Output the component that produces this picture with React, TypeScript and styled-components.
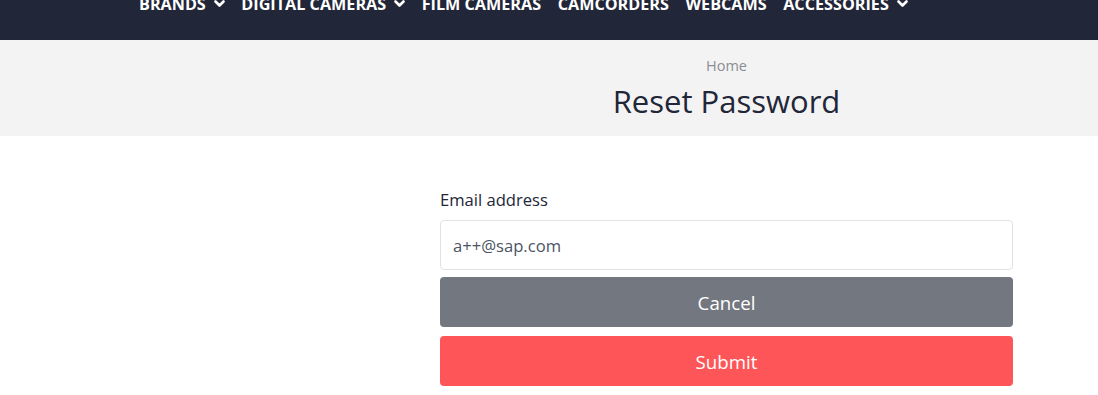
import React from "react";
import styled, { createGlobalStyle } from "styled-components";

const Global = createGlobalStyle`
  html, body { margin: 0; padding: 0; background: #ffffff; }
  body { font-family: "Open Sans", "Noto Sans", sans-serif; overflow: hidden; }
  * { box-sizing: border-box; }
`;

const Page = styled.div`
  width: 1098px;
  height: 395px;
  overflow: hidden;
  background: #ffffff;
`;

const NavBar = styled.nav`
  height: 40px;
  background: #212638;
  overflow: hidden;
`;

const NavList = styled.ul`
  list-style: none;
  margin: -8px 0 0 0;
  padding: 0 0 0 139px;
  display: flex;
  gap: 16.5px;
`;

const NavItem = styled.li`
  display: flex;
  align-items: center;
  gap: 8px;
  color: #ffffff;
  font-size: 16.2px;
  font-weight: 700;
  line-height: 24px;
  text-transform: uppercase;
  white-space: nowrap;
`;

const Chevron = () => (
  <svg width="11" height="8" viewBox="0 0 11 8" style={{ marginTop: -1 }}>
    <polyline points="1.5,1.5 5.5,5.5 9.5,1.5" fill="none" stroke="#fff" strokeWidth="2.6" strokeLinecap="round" strokeLinejoin="round" />
  </svg>
);

const Band = styled.header`
  height: 96px;
  background: #f3f3f3;
  display: grid;
  grid-template-columns: 440px 573px;
`;

const BandInner = styled.div`
  grid-column: 2;
  display: flex;
  flex-direction: column;
  align-items: center;
  padding-top: 16px;
`;

const Crumb = styled.div`
  font-size: 14.5px;
  line-height: 20px;
  color: #8a8d92;
`;

const Title = styled.h1`
  margin: 5px 0 0 0;
  font-size: 31px;
  line-height: 40px;
  font-weight: 400;
  color: #212638;
`;

const Main = styled.main`
  display: grid;
  grid-template-columns: 440px 573px;
  padding-top: 52px;
`;

const Form = styled.form`
  grid-column: 2;
  display: flex;
  flex-direction: column;
`;

const Label = styled.label`
  font-size: 16.6px;
  line-height: 24px;
  color: #212638;
  margin-bottom: 8px;
`;

const Input = styled.input`
  height: 50px;
  width: 100%;
  border: 1px solid #e2e2e4;
  border-radius: 4px;
  padding: 0 12px;
  font-family: "Open Sans", "Noto Sans", sans-serif;
  font-size: 16.6px;
  color: #4b5563;
  background: #fff;
  outline: none;
`;

const Button = styled.button<{ $variant: "cancel" | "submit" }>`
  height: 50px;
  width: 100%;
  border: none;
  border-radius: 4px;
  font-family: "Open Sans", "Noto Sans", sans-serif;
  font-size: 18.7px;
  color: #ffffff;
  background: ${(p) => (p.$variant === "cancel" ? "#737780" : "#fe5658")};
  margin-top: ${(p) => (p.$variant === "cancel" ? "7px" : "9px")};
  cursor: pointer;
`;

const items: { label: string; menu: boolean }[] = [
  { label: "Brands", menu: true },
  { label: "Digital Cameras", menu: true },
  { label: "Film Cameras", menu: false },
  { label: "Camcorders", menu: false },
  { label: "Webcams", menu: false },
  { label: "Accessories", menu: true },
];

export default function App() {
  return (
    <Page>
      <Global />
      <NavBar>
        <NavList>
          {items.map((it) => (
            <NavItem key={it.label}>
              {it.label}
              {it.menu && <Chevron />}
            </NavItem>
          ))}
        </NavList>
      </NavBar>
      <Band>
        <BandInner>
          <Crumb>Home</Crumb>
          <Title>Reset Password</Title>
        </BandInner>
      </Band>
      <Main>
        <Form onSubmit={(e) => e.preventDefault()}>
          <Label htmlFor="email">Email address</Label>
          <Input id="email" type="email" defaultValue="a++@sap.com" />
          <Button type="button" $variant="cancel">Cancel</Button>
          <Button type="submit" $variant="submit">Submit</Button>
        </Form>
      </Main>
    </Page>
  );
}
